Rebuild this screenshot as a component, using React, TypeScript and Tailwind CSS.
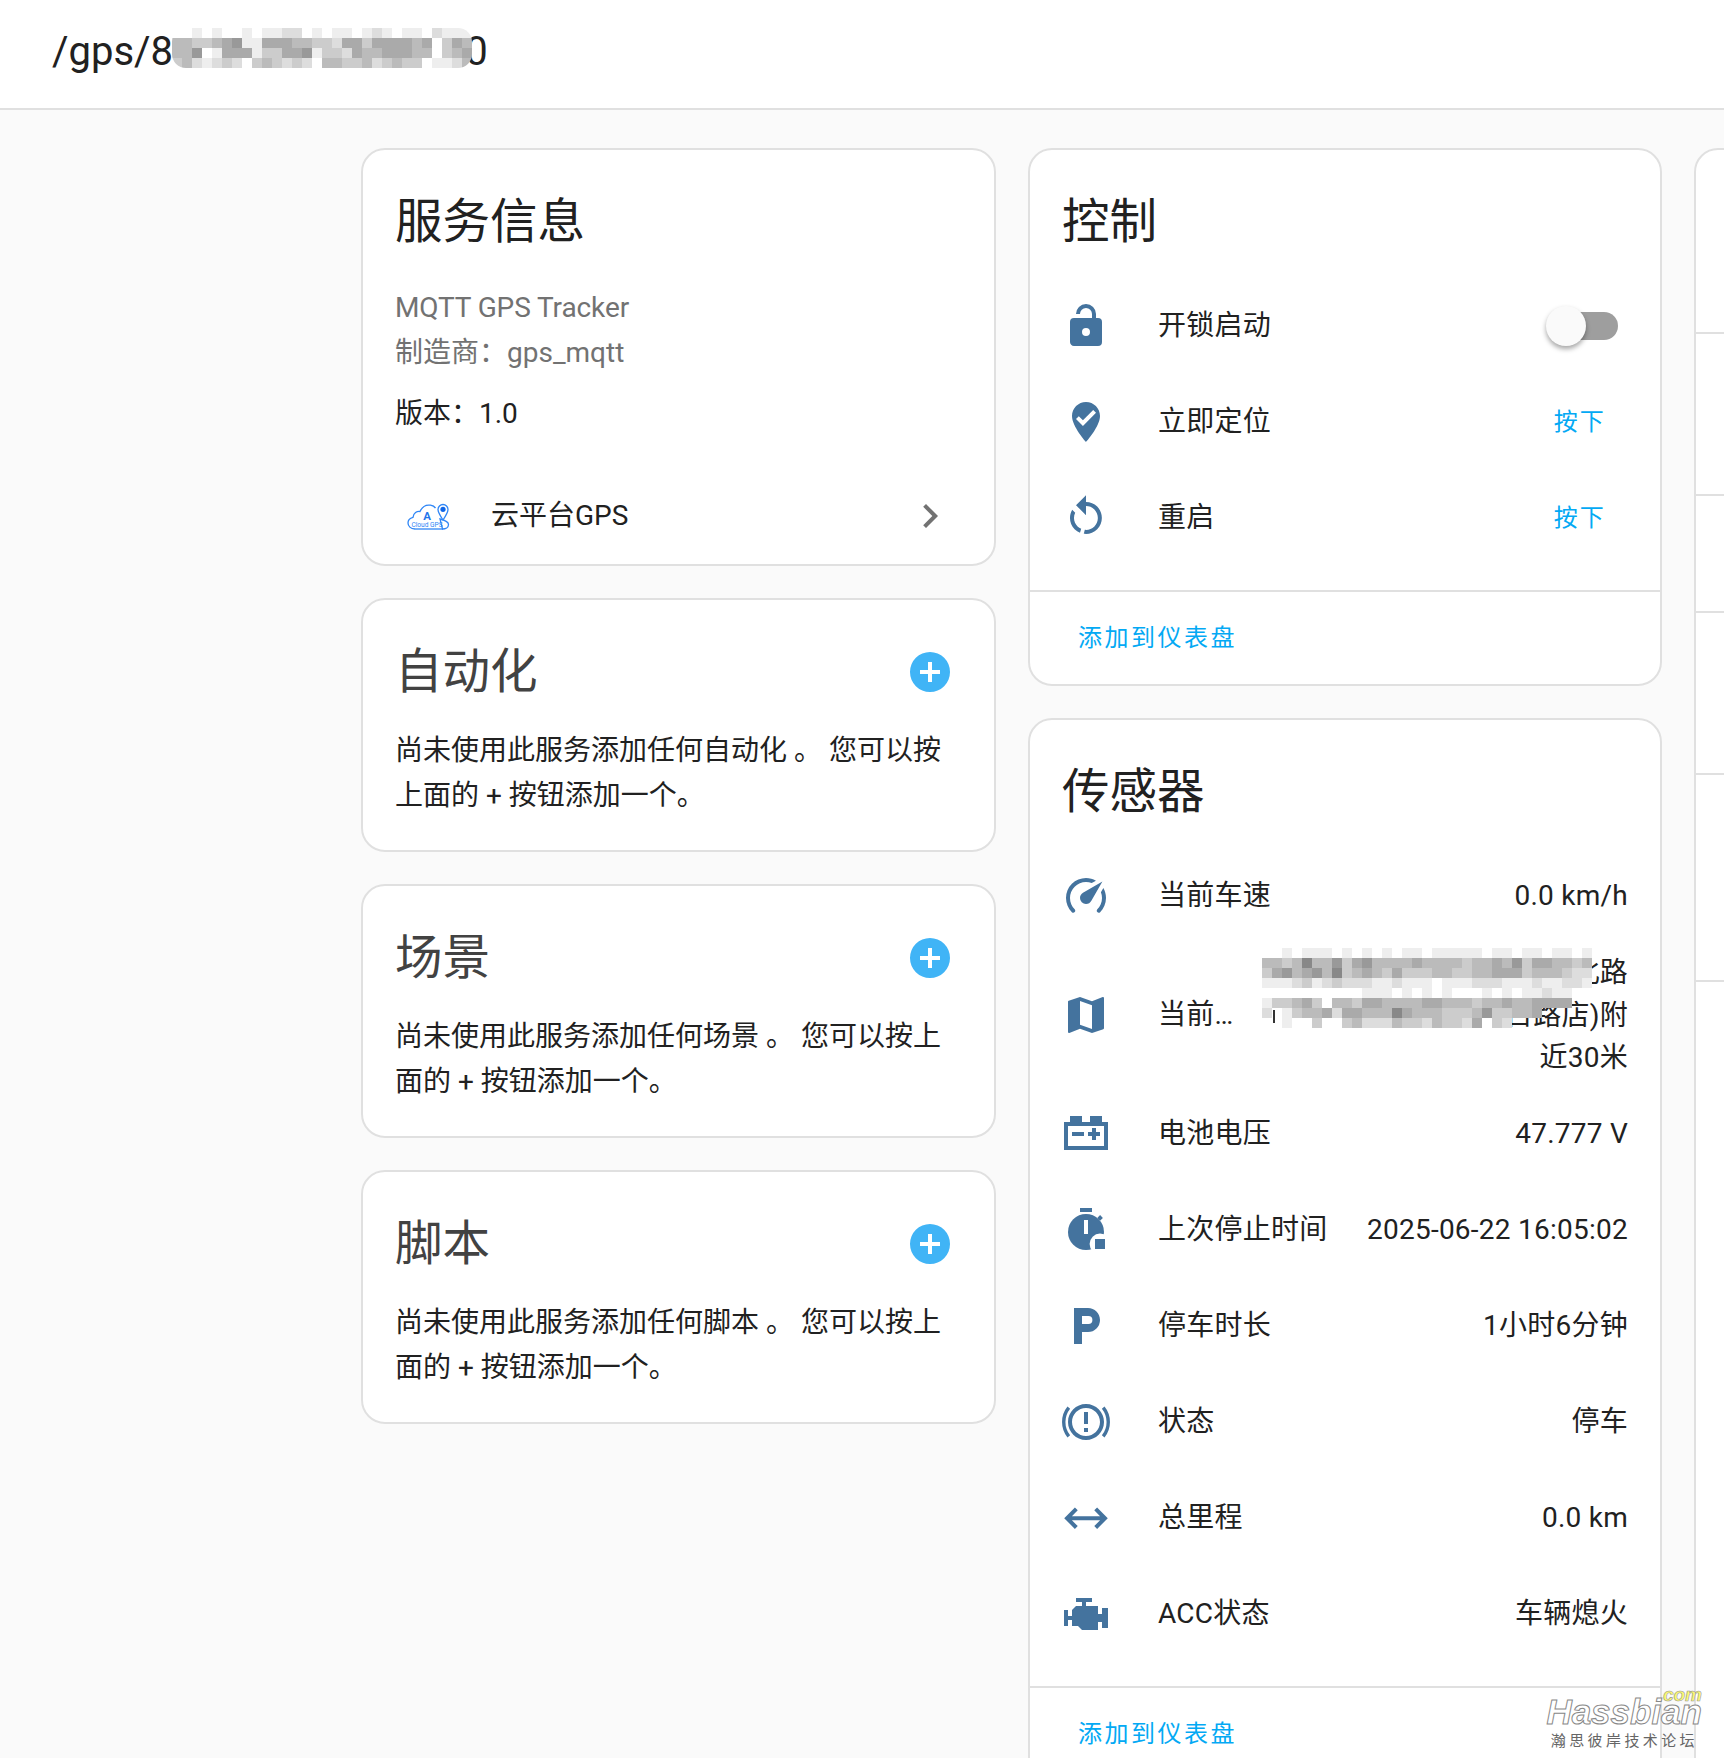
import React from 'react'

const fontStack = "font-['Roboto','Noto_Sans_CJK_SC',sans-serif]"

// mdi paths
const icons: Record<string, string> = {
  lockOpen:
    'M18,8A2,2 0 0,1 20,10V20A2,2 0 0,1 18,22H6C4.89,22 4,21.1 4,20V10A2,2 0 0,1 6,8H15V6A3,3 0 0,0 12,3A3,3 0 0,0 9,6H7A5,5 0 0,1 12,1A5,5 0 0,1 17,6V8H18M12,17A2,2 0 0,0 14,15A2,2 0 0,0 12,13A2,2 0 0,0 10,15A2,2 0 0,0 12,17Z',
  markerCheck:
    'M12,2C15.86,2 19,5.14 19,9C19,14.25 12,22 12,22C12,22 5,14.25 5,9C5,5.14 8.14,2 12,2M10.47,14L17,7.41L15.6,6L10.47,11.18L8.4,9.09L7,10.5L10.47,14Z',
  restart:
    'M12,4C14.1,4 16.1,4.8 17.6,6.3C20.7,9.4 20.7,14.5 17.6,17.6C15.8,19.5 13.3,20.2 10.9,19.9L11.4,17.9C13.1,18.1 14.9,17.5 16.2,16.2C18.5,13.9 18.5,10.1 16.2,7.7C15.1,6.6 13.5,6 12,6V10.6L7,5.6L12,0.6V4M6.3,17.6C3.7,15 3.3,11 5.1,7.9L6.6,9.4C5.5,11.6 5.9,14.4 7.8,16.2C8.3,16.7 8.9,17.1 9.6,17.4L9,19.4C8,19 7.1,18.4 6.3,17.6Z',
  speedometer:
    'M12,16A3,3 0 0,1 9,13C9,11.88 9.61,10.9 10.5,10.39L20.21,4.77L14.68,14.35C14.18,15.33 13.17,16 12,16M12,3C13.81,3 15.5,3.5 16.97,4.32L14.87,5.53C14,5.19 13,5 12,5A8,8 0 0,0 4,13C4,15.21 4.89,17.21 6.34,18.65H6.35C6.74,19.04 6.74,19.67 6.35,20.06C5.96,20.45 5.32,20.45 4.93,20.07V20.07C3.12,18.26 2,15.76 2,13A10,10 0 0,1 12,3M22,13C22,15.76 20.88,18.26 19.07,20.07V20.07C18.68,20.45 18.05,20.45 17.66,20.06C17.27,19.67 17.27,19.04 17.66,18.65V18.65C19.11,17.2 20,15.21 20,13C20,12 19.81,11 19.46,10.1L20.68,8C21.5,9.5 22,11.18 22,13Z',
  map: 'M15,19L9,16.89V5L15,7.11M20.5,3C20.44,3 20.39,3 20.34,3L15,5.1L9,3L3.36,4.9C3.15,4.97 3,5.15 3,5.38V20.5A0.5,0.5 0 0,0 3.5,21C3.55,21 3.61,21 3.66,20.97L9,18.9L15,21L20.64,19.1C20.85,19 21,18.85 21,18.62V3.5A0.5,0.5 0 0,0 20.5,3Z',
  battery:
    'M4,3V6H1V20H23V6H20V3H14V6H10V3H4M3,8H21V18H3V8M15,9V11H13V13H15V15H17V13H19V11H17V9H15M5,11V13H11V11H5Z',
  parking:
    'M13.2,11H10V7H13.2A2,2 0 0,1 15.2,9A2,2 0 0,1 13.2,11M13,3H6V21H10V15H13A6,6 0 0,0 19,9C19,5.68 16.31,3 13,3Z',
  arrows:
    'M6.45,17.45L1.11,12.11L6.45,6.77L7.87,8.18L4.95,11.11H19.05L16.13,8.18L17.55,6.77L22.89,12.11L17.55,17.45L16.13,16.04L19.05,13.11H4.95L7.87,16.04L6.45,17.45Z',
  engine:
    'M7,4V6H10V8H7L5,10V13H3V10H1V18H3V15H5V18H8L10,20H18V16H20V19H23V9H20V12H18V8H12V6H15V4H7Z',
  plus: 'M17,13H13V17H11V13H7V11H11V7H13V11H17M12,2A10,10 0 0,0 2,12A10,10 0 0,0 12,22A10,10 0 0,0 22,12A10,10 0 0,0 12,2Z',
  chevron: 'M8.59,16.58L13.17,12L8.59,7.41L10,6L16,12L10,18L8.59,16.58Z',
}

const Icon = ({ name, className }: { name: string; className?: string }) => (
  <svg viewBox="0 0 24 24" className={`h-[48px] w-[48px] shrink-0 fill-current ${className ?? 'text-[#44739e]'}`}>
    <path d={icons[name]} />
  </svg>
)

// 停止时间 icon: stopwatch with a cut-out corner
const TimerIcon = () => (
  <svg viewBox="0 0 24 24" className="h-[48px] w-[48px] shrink-0 text-[#44739e]">
    <path fill="currentColor" d="M9 1h6v2H9zM19.03 7.39l1.42-1.42-1.41-1.41-1.42 1.42z" />
    <circle cx="12" cy="13" r="9" fill="currentColor" />
    <rect x="11" y="7" width="2" height="7" fill="#fff" />
    <circle cx="19" cy="19" r="5.2" fill="#fff" />
    <rect x="16.5" y="16.5" width="5" height="5" fill="currentColor" />
  </svg>
)

const BrakeIcon = () => (
  <svg viewBox="0 0 24 24" className="h-[48px] w-[48px] shrink-0 text-[#44739e]">
    <path
      fill="currentColor"
      d="M11,15H13V17H11V15M11,7H13V13H11V7M12,3C16.97,3 21,7.03 21,12C21,16.97 16.97,21 12,21C7.03,21 3,16.97 3,12C3,7.03 7.03,3 12,3M12,5C8.13,5 5,8.13 5,12C5,15.87 8.13,19 12,19C15.87,19 19,15.87 19,12C19,8.13 15.87,5 12,5Z"
    />
    <path fill="none" stroke="currentColor" strokeWidth="1.7" d="M3.4 4.8A11.5 11.5 0 0 0 3.4 19.2M20.6 4.8A11.5 11.5 0 0 1 20.6 19.2" />
  </svg>
)

const CloudLogo = () => (
  <svg viewBox="0 0 44 30" className="h-[30px] w-[44px]">
    <path
      d="M8 28C3.5 28 1 25 1 22C1 19 3 17 6 16.3C6.5 12 10 10 13 10.5C15 6 19 3.5 23.5 4.2C26 4.6 27.5 5.6 28.5 7M33 18C37 19 41.5 20.5 41.5 23.5C41.5 26.5 38.5 28 35.5 28Z"
      fill="none"
      stroke="#2f86f6"
      strokeWidth="1.3"
    />
    <path d="M8 28H36" stroke="#2f86f6" strokeWidth="1.3" />
    <path d="M36 19C33 14.5 31 11.5 31 8.5A5 5 0 0 1 41 8.5C41 11.5 39 14.5 36 19Z" fill="#fff" stroke="#2f86f6" strokeWidth="1.3" />
    <circle cx="36" cy="8.3" r="2.6" fill="#0f66e8" />
    <text x="20" y="18.5" textAnchor="middle" fontSize="11.5" fontWeight="700" fill="#1f74ea" fontFamily="Roboto">A</text>
    <text x="20" y="25.5" textAnchor="middle" fontSize="6.6" fill="#2f86f6" fontFamily="Roboto">Cloud GPS</text>
  </svg>
)

// 打码区块：每个字元是一格灰階，'.' 為透明
const Mosaic = ({ rows, className, children }: { rows: string[]; className: string; children?: React.ReactNode }) => (
  <svg
    viewBox={`0 0 ${rows[0].length * 10} ${rows.length * 10}`}
    width={rows[0].length * 10}
    height={rows.length * 10}
    className={className}
    shapeRendering="crispEdges"
  >
    {rows.map((row, y) =>
      row.split('').map((c, x) =>
        c === '.' ? null : <rect key={`${x}-${y}`} x={x * 10} y={y * 10} width="10" height="10" fill={`#${c}${c}${c}`} />,
      ),
    )}
    {children}
  </svg>
)

const titleMosaic = [
  'ffefeffefeeddfefeefedefeefdeee',
  'bbccba9eeaaabbccdaacaaaabafcab',
  'bb9feaaaeccaa9eccdabbaaabbfcba',
  'cbdedcdfcbcdcdfbbccbdcbccfeedb',
]

const addressMosaic = [
  'ffefeeefefefefeefeeeeefeefeefeefe',
  'bbcb8bb9ca9bbbbabbbbcbbab9caabbcb',
  'ca9ba9b8cbabcacccbbccbbaaacbbbcdd',
  'eeedcedcdddeedeeefeeedddeeedeedde',
  '..........eeefefefefffefefeedeef.',
  'eccbacfbbcaabbbbaabbbcbbabbaaaa..',
  'dfecbbadaabbb8abbbcccb9ccbba.....',
  '.fef.cf.cbdddbccdbccda.cd........',
]

const Card = ({ children, className = 'w-[634px]' }: { children: React.ReactNode; className?: string }) => (
  <div className={`shrink-0 rounded-[24px] border-2 border-[#e0e0e0] bg-white ${className}`}>{children}</div>
)

const CardTitle = ({ children, className = 'text-[#212121]' }: { children: React.ReactNode; className?: string }) => (
  <div className={`px-[32px] pt-[32px] text-[47.5px] leading-[80px] ${className}`}>{children}</div>
)

const AddToDashboard = () => (
  <div className="flex h-[94px] items-center border-t-2 border-[#e0e0e0] pl-[48px] text-[24px] tracking-[2.5px] text-[#03a9f4]">
    添加到仪表盘
  </div>
)

const Row = ({ icon, label, children }: { icon: React.ReactNode; label: string; children?: React.ReactNode }) => (
  <div className="flex h-[96px] items-center text-[28px] tracking-[0.25px] text-[#212121]">
    {icon}
    <div className="ml-[48px]">{label}</div>
    <div className="ml-auto text-right">{children}</div>
  </div>
)

const PressButton = () => <div className="mr-[22px] text-[24px] tracking-[2.14px] text-[#03a9f4]">按下</div>

const EmptyCard = ({ title, children }: { title: string; children: React.ReactNode }) => (
  <Card className="h-[254px] w-[635px]">
    <div className="flex items-center justify-between pr-[40px]">
      <CardTitle className="text-[#424242]">{title}</CardTitle>
      <Icon name="plus" className="mt-[32px] text-[#40b4f6]" />
    </div>
    <div className="mt-[16px] px-[32px] text-[28px] leading-[45px] text-[#212121]">{children}</div>
  </Card>
)

export default function App() {
  return (
    <div className={`relative h-[1758px] w-full overflow-hidden bg-[#fafafa] ${fontStack}`}>
      {/* 頂部標題 */}
      <div className="relative flex h-[110px] items-center border-b-2 border-[#e0e0e0] bg-white pb-[4px] pl-[52px] text-[40px] text-[#212121]">
        /gps/800000000000000
        <Mosaic rows={titleMosaic} className="absolute top-[28px] left-[172px] rounded-[14px]" />
      </div>

      <div className="flex gap-[32px] pt-[38px] pl-[361px]">
        {/* 第一欄 */}
        <div className="flex shrink-0 flex-col gap-[32px]">
          <Card className="w-[635px]">
            <CardTitle>服务信息</CardTitle>
            <div className="mt-[23px] px-[32px] text-[28px] leading-[45px]">
              <div className="tracking-[-0.1px] text-[#727272]">MQTT GPS Tracker</div>
              <div className="text-[#727272]">制造商：gps_mqtt</div>
              <div className="mt-[16px] text-[#212121]">版本：1.0</div>
            </div>
            <div className="mt-[32px] flex h-[96px] items-center pr-[40px] pl-[44px] text-[28px] text-[#212121]">
              <CloudLogo />
              <div className="ml-[40px]">云平台GPS</div>
              <Icon name="chevron" className="ml-auto text-[#727272]" />
            </div>
          </Card>
          <EmptyCard title="自动化">尚未使用此服务添加任何自动化 。 您可以按上面的 + 按钮添加一个。</EmptyCard>
          <EmptyCard title="场景">尚未使用此服务添加任何场景 。 您可以按上面的 + 按钮添加一个。</EmptyCard>
          <EmptyCard title="脚本">尚未使用此服务添加任何脚本 。 您可以按上面的 + 按钮添加一个。</EmptyCard>
        </div>

        {/* 第二欄 */}
        <div className="flex shrink-0 flex-col gap-[32px]">
          <Card>
            <CardTitle>控制</CardTitle>
            <div className="mt-[16px] px-[32px] pb-[24px]">
              <Row icon={<Icon name="lockOpen" />} label="开锁启动">
                <div className="relative mr-[10px] h-[28px] w-[64px] rounded-full bg-[#9e9e9e]">
                  <div className="absolute top-[-6px] left-[-8px] h-[40px] w-[40px] rounded-full bg-[#fafafa] shadow-[0_3px_5px_rgba(0,0,0,0.35)]" />
                </div>
              </Row>
              <Row icon={<Icon name="markerCheck" />} label="立即定位">
                <PressButton />
              </Row>
              <Row icon={<Icon name="restart" />} label="重启">
                <PressButton />
              </Row>
            </div>
            <AddToDashboard />
          </Card>
          <Card>
            <CardTitle>传感器</CardTitle>
            <div className="mt-[16px] px-[32px] pb-[24px]">
              <Row icon={<Icon name="speedometer" />} label="当前车速">
                0.0 km/h
              </Row>
              <div className="relative flex h-[142px] items-center text-[28px] tracking-[0.25px] text-[#212121]">
                <Icon name="map" />
                <div className="ml-[48px] w-[80px] truncate">当前车辆位置</div>
                <div className="ml-auto pt-[2px] text-right leading-[42.5px]">
                  北路
                  <br />
                  日路店)附
                  <br />
                  近30米
                </div>
                <Mosaic rows={addressMosaic} className="absolute top-[4px] left-[200px]">
                  <rect x="11" y="62" width="2" height="13" fill="#333" />
                </Mosaic>
              </div>
              <Row icon={<Icon name="battery" />} label="电池电压">
                47.777 V
              </Row>
              <Row icon={<TimerIcon />} label="上次停止时间">
                2025-06-22 16:05:02
              </Row>
              <Row icon={<Icon name="parking" />} label="停车时长">
                1小时6分钟
              </Row>
              <Row icon={<BrakeIcon />} label="状态">
                停车
              </Row>
              <Row icon={<Icon name="arrows" />} label="总里程">
                0.0 km
              </Row>
              <Row icon={<Icon name="engine" />} label="ACC状态">
                车辆熄火
              </Row>
            </div>
            <AddToDashboard />
          </Card>
        </div>

        {/* 第三欄，右側被裁切 */}
        <Card className="w-[634px] divide-y-2 divide-[#e0e0e0]">
          <div className="h-[184px]" />
          <div className="h-[162px]" />
          <div className="h-[117px]" />
          <div className="h-[162px]" />
          <div className="h-[207px]" />
          <div className="h-[98px]" />
        </Card>
      </div>

      {/* 浮水印 */}
      <div className="absolute right-[22px] bottom-[8px] flex w-[160px] flex-col items-end">
        <div className="mb-[-12px] font-['Liberation_Sans',sans-serif] text-[19px] leading-[20px] font-bold text-[#fdfb6e] italic [-webkit-text-stroke:0.6px_#999]">
          com
        </div>
        <div className="font-['Liberation_Sans',sans-serif] text-[35px] leading-[38px] font-bold text-white italic [-webkit-text-stroke:1px_#888]">
          Hassbian
        </div>
        <div className="mt-[1px] mr-[4px] text-[15px] leading-[18px] tracking-[3.4px] whitespace-nowrap text-[#666]">瀚思彼岸技术论坛</div>
      </div>
    </div>
  )
}
